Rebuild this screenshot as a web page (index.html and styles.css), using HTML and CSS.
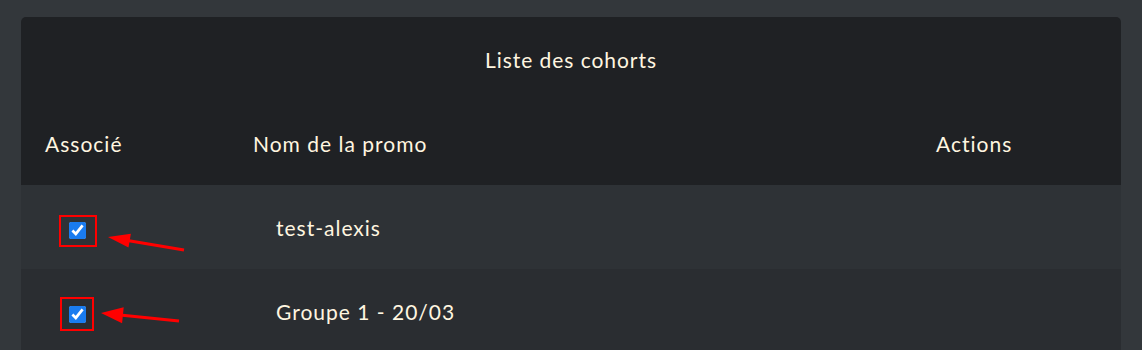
FILE: index.html
```html
<!DOCTYPE html>
<html lang="fr">
<head>
<meta charset="utf-8">
<title>Liste des cohorts</title>
<link rel="stylesheet" href="styles.css">
</head>
<body>
<div class="page">
  <section class="card">
    <header class="card-head">
      <h2 class="title">Liste des cohorts</h2>
      <div class="cols">
        <div class="col-assoc">Associé</div>
        <div class="col-name">Nom de la promo</div>
        <div class="col-actions">Actions</div>
      </div>
    </header>
    <div class="row row-a">
      <div class="col-assoc cell-check"><input type="checkbox" class="check" checked></div>
      <div class="col-name cell-name">test-alexis</div>
      <div class="col-actions"></div>
    </div>
    <div class="row row-b">
      <div class="col-assoc cell-check"><input type="checkbox" class="check" checked></div>
      <div class="col-name cell-name">Groupe 1 - 20/03</div>
      <div class="col-actions"></div>
    </div>
    <svg class="annot" width="200" height="340" viewBox="0 0 200 340">
      <g transform="translate(-21,-17)">
        <rect x="60" y="216" width="36" height="30" fill="none" stroke="#ff0000" stroke-width="2"/>
        <rect x="61" y="298" width="32" height="32" fill="none" stroke="#ff0000" stroke-width="2"/>
        <line x1="184" y1="250" x2="126" y2="240.3" stroke="#ff0000" stroke-width="3"/>
        <polygon points="108,237 128.5,247.6 130.9,233.8" fill="#ff0000"/>
        <line x1="179" y1="321" x2="120" y2="315" stroke="#ff0000" stroke-width="3"/>
        <polygon points="101,313 122.1,323.2 123.7,307.2" fill="#ff0000"/>
      </g>
    </svg>
  </section>
</div>
</body>
</html>
```

FILE: styles.css
```css
html, body {
  margin: 0;
  padding: 0;
  background: #33373b;
}
body {
  font-family: Lato, "Open Sans", sans-serif;
  color: #fff6e0;
  width: 1142px;
  height: 350px;
  overflow: hidden;
}
.page {
  padding: 17px 21px 0 21px;
}
.card {
  position: relative;
  width: 1100px;
  border-radius: 5px 5px 0 0;
  overflow: hidden;
}
.card-head {
  background: #1f2124;
  height: 168px;
  display: flex;
  flex-direction: column;
}
.title {
  margin: 0;
  height: 84px;
  display: flex;
  align-items: center;
  justify-content: center;
  font-size: 21px;
  font-weight: 400;
  letter-spacing: 0.95px;
}
.cols {
  height: 84px;
  display: flex;
  align-items: center;
  font-size: 21px;
  letter-spacing: 1px;
  padding-left: 24px;
}
.row {
  height: 84px;
  display: flex;
  align-items: center;
  padding-left: 24px;
}
.row-a { background: #2e3236; }
.row-b { background: #2a2d31; }
.col-assoc { width: 208px; }
.col-name { width: 683px; }
.col-actions { flex: 1; }
.cell-check {
  display: flex;
  padding-left: 24px;
  box-sizing: border-box;
}
.check {
  width: 17px;
  height: 17px;
  margin: 6px 0 0 0;
  accent-color: #1a7cf0;
}
.cell-name {
  padding-left: 23px;
  box-sizing: border-box;
  font-size: 21px;
  letter-spacing: 1px;
}
.annot {
  position: absolute;
  left: 0;
  top: 0;
  pointer-events: none;
}
```
